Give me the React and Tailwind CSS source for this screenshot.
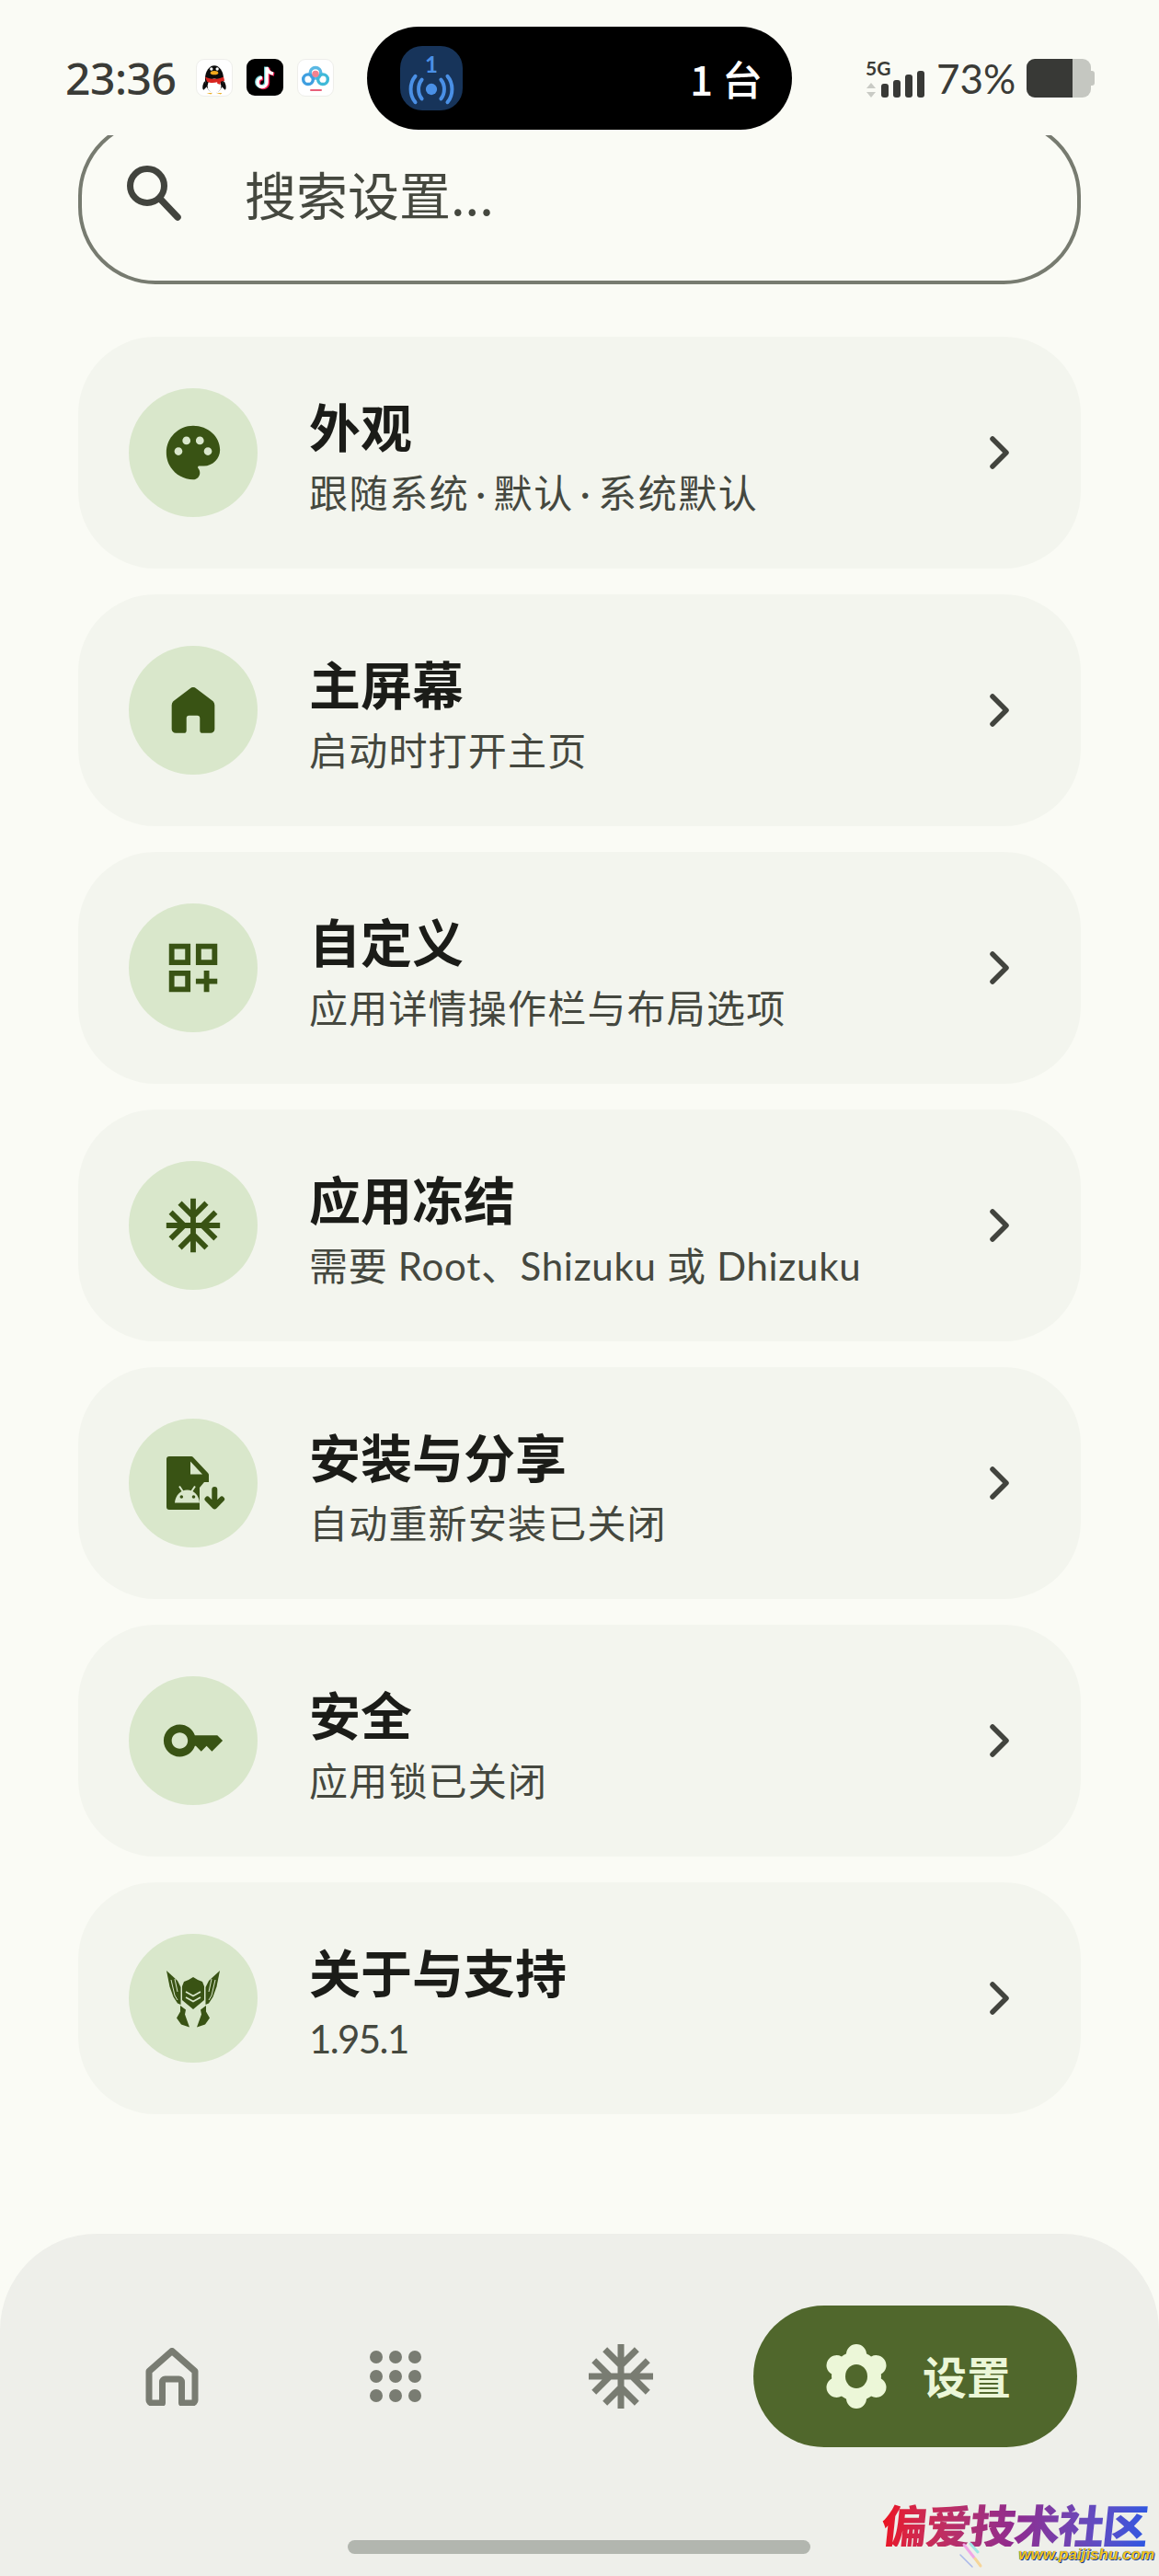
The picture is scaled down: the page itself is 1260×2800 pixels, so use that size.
const CJK = { fontFamily: '"Noto Sans CJK SC", sans-serif' };
const MIX = { fontFamily: 'Lato, "Noto Sans CJK SC", sans-serif' };

const P = {
  palette:
    "M12 2C6.49 2 2 6.49 2 12s4.49 10 10 10c1.38 0 2.5-1.12 2.5-2.5 0-.61-.23-1.2-.64-1.67-.08-.1-.13-.21-.13-.33 0-.28.22-.5.5-.5H16c3.31 0 6-2.69 6-6 0-4.96-4.49-9-10-9zm-5.5 11c-.83 0-1.5-.67-1.5-1.5S5.67 10 6.5 10s1.5.67 1.5 1.5S7.33 13 6.5 13zm3-4C8.67 9 8 8.33 8 7.5S8.67 6 9.5 6s1.5.67 1.5 1.5S10.33 9 9.5 9zm5 0c-.83 0-1.5-.67-1.5-1.5S13.67 6 14.5 6s1.5.67 1.5 1.5S15.33 9 14.5 9zm3 4c-.83 0-1.5-.67-1.5-1.5s.67-1.5 1.5-1.5 1.5.67 1.5 1.5-.67 1.5-1.5 1.5z",
  home:
    "M10.8 3.9a2 2 0 0 1 2.4 0l6 4.6a2 2 0 0 1 .8 1.6V19a1.5 1.5 0 0 1-1.5 1.5h-3a1 1 0 0 1-1-1V15a1 1 0 0 0-1-1h-3a1 1 0 0 0-1 1v4.5a1 1 0 0 1-1 1h-3A1.5 1.5 0 0 1 4 19v-8.900a2 2 0 0 1 .8-1.600z",
  custom:
    "M3 11h8V3H3v8zm2-6h4v4H5V5zm8-2v8h8V3h-8zm6 6h-4V5h4v4zM3 21h8v-8H3v8zm2-6h4v4H5v-4zm13-2h-2v3h-3v2h3v3h2v-3h3v-2h-3z",
  snow:
    "M22 11h-4.170l3.240-3.240-1.410-1.420L15 11h-2V9l4.660-4.660-1.420-1.410L13 6.170V2h-2v4.170L7.760 2.930 6.340 4.340 11 9v2H9L4.340 6.340 2.930 7.760 6.170 11H2v2h4.170l-3.240 3.240 1.410 1.420L9 13h2v2l-4.660 4.660 1.420 1.410L11 17.830V22h2v-4.170l3.240 3.240 1.420-1.410L13 15v-2h2l4.660 4.660 1.410-1.420L17.830 13H22z",
  key:
    "M21 10h-8.350C11.830 7.670 9.610 6 7 6c-3.310 0-6 2.690-6 6s2.690 6 6 6c2.610 0 4.830-1.670 5.650-4H13l2 2 2-2 2 2 4-4.040L21 10zM7 15c-1.650 0-3-1.350-3-3s1.350-3 3-3 3 1.350 3 3-1.350 3-3 3z",
};

function Mat({ d, size = 70, color = "#395314" }) {
  return (
    <svg width={size} height={size} viewBox="0 0 24 24" fill={color} className="shrink-0">
      <path d={d} />
    </svg>
  );
}

function ApkIcon() {
  return (
    <svg width="70" height="70" viewBox="0 0 70 70" className="shrink-0">
      <path d="M9 6H33a3 3 0 0 1 2 1L51 24a3 3 0 0 1 1 2V34H47L42 40V64H9a3 3 0 0 1-3-3V9a3 3 0 0 1 3-3z" fill="#395314" />
      <path d="M32 11.500 45 25.500H32z" fill="#d9e7cb" />
      <path d="M15 56.500c.5-8 6.500-14 13.500-14s13 6 13.500 14z" fill="#d9e7cb" />
      <path d="M20 38.500l4 6M37 38.500l-4 6" stroke="#d9e7cb" strokeWidth="2" />
      <circle cx="22.300" cy="50" r="1.800" fill="#395314" />
      <circle cx="35.500" cy="50" r="1.800" fill="#395314" />
      <path d="M58.300 42v17M50.500 52.500l7.800 7.800 7.800-7.800" fill="none" stroke="#395314" strokeWidth="6" strokeLinecap="round" strokeLinejoin="round" />
    </svg>
  );
}

function HelmetIcon() {
  const half = (
    <g fill="#395314">
      <path d="M6 5 18 16l3.500 7v19l-3.500-1.500-4.500-7-4-11z" />
      <path d="M21 43l6 4.500-1 5 5 14-9-3-5-7 4-7z" />
    </g>
  );
  return (
    <svg width="70" height="70" viewBox="0 0 70 70" className="shrink-0">
      {half}
      <g transform="translate(70 0) scale(-1 1)">{half}</g>
      <path d="M35 12l5 3 5 2 2 5v15L35 47 23 37V22l2-5 5-2z" fill="#395314" />
      <path d="M27 28l8 4.500 8-4.500M27 34l8 4.500 8-4.500" fill="none" stroke="#d9e7cb" strokeWidth="1.600" />
      <path d="M11 15l4 17 3 5M15 14l3 14M59 15l-4 17-3 5M55 14l-3 14" fill="none" stroke="#d9e7cb" strokeWidth="1" />
    </svg>
  );
}

const rows = [
  { t: "外观", s: "跟随系统\u2009·\u2009默认\u2009·\u2009系统默认", i: <Mat d={P.palette} />, c: "tracking-[1.6px]" },
  { t: "主屏幕", s: "启动时打开主页", i: <Mat d={P.home} />, c: "tracking-[1.2px]" },
  { t: "自定义", s: "应用详情操作栏与布局选项", i: <Mat d={P.custom} />, c: "tracking-[1.2px]" },
  { t: "应用冻结", s: "需要 Root、Shizuku 或 Dhizuku", i: <Mat d={P.snow} />, c: "tracking-[0.7px]" },
  { t: "安装与分享", s: "自动重新安装已关闭", i: <ApkIcon />, c: "tracking-[1.2px]" },
  { t: "安全", s: "应用锁已关闭", i: <Mat d={P.key} />, c: "tracking-[1.2px]" },
  { t: "关于与支持", s: "1.95.1", i: <HelmetIcon />, c: "tracking-[-1.6px]" },
];

function Row({ t, s, i, c }) {
  return (
    <div className="flex h-[252px] items-center rounded-[84px] bg-[#f3f5ee] pl-[55px] pr-[72px]">
      <div className="flex h-[140px] w-[140px] shrink-0 items-center justify-center rounded-full bg-[#d9e7cb]">{i}</div>
      <div className="ml-[56px] flex min-w-0 flex-1 flex-col pt-[7px]">
        <div className="text-[56px] font-bold leading-[68px] text-[#1b1c18]" style={CJK}>{t}</div>
        <div className={`mt-[13px] text-[42px] leading-[54px] text-[#45483f] ${c}`} style={MIX}>{s}</div>
      </div>
      <svg width="32" height="40" viewBox="0 0 32 40" fill="none" className="shrink-0">
        <path d="M8 5l15 15L8 35" stroke="#42443e" strokeWidth="5.500" strokeLinecap="round" strokeLinejoin="round" />
      </svg>
    </div>
  );
}

function AppIcons() {
  return (
    <div className="ml-[21px] mt-[64px] flex gap-[15px]">
      <div className="flex h-[41px] w-[40px] items-center justify-center rounded-[9px] border border-[#eeeeea] bg-white">
        <svg width="28" height="36" viewBox="0 0 26 34">
          <ellipse cx="13" cy="18" rx="9.500" ry="14" fill="#0b0b0b" />
          <path d="M3 20C.5 24 .5 28 2 29l4-4zM23 20c2.500 4 2.500 8 1 9l-4-4z" fill="#0b0b0b" />
          <ellipse cx="13" cy="25" rx="7" ry="7.500" fill="#fff" />
          <ellipse cx="13" cy="11.500" rx="4" ry="2" fill="#f2a81c" />
          <circle cx="10" cy="7.500" r="1.600" fill="#fff" />
          <circle cx="16" cy="7.500" r="1.600" fill="#fff" />
          <path d="M3.500 15.500c6 3 13 3 19 0l1 4-4 1-.5 3-3-1v-1.500c-3.500 1-7.500 1-10.500-.5z" fill="#d8251f" />
          <path d="M5 32h6l-1.500 1.500zM15 32h6l-1.500 1.500z" fill="#eab02a" />
        </svg>
      </div>
      <div className="flex h-[40px] w-[40px] items-center justify-center rounded-[9px] bg-black">
        <svg width="28" height="30" viewBox="0 0 28 30" fill="none">
          <path d="M16 4v16.500a5 5 0 1 1-5-5" stroke="#ee1d52" strokeWidth="4" transform="translate(1.200 .8)" />
          <path d="M16 4c.5 4 3.500 6.500 7 7" stroke="#ee1d52" strokeWidth="4" transform="translate(1.200 .8)" />
          <path d="M16 4v16.500a5 5 0 1 1-5-5" stroke="#69c9d0" strokeWidth="4" transform="translate(-1 -.5)" />
          <path d="M16 4v16.500a5 5 0 1 1-5-5M16 4c.5 4 3.500 6.500 7 7" stroke="#fff" strokeWidth="3.500" />
        </svg>
      </div>
      <div className="flex h-[41px] w-[40px] flex-col items-center rounded-[9px] border border-[#eeeeea] bg-white pt-[5px]">
        <svg width="32" height="25" viewBox="0 0 30 22" fill="none">
          <circle cx="15" cy="8" r="5.500" stroke="#59b7e3" strokeWidth="3.200" />
          <circle cx="7.500" cy="14.500" r="5" stroke="#3f9fe0" strokeWidth="3.200" />
          <circle cx="22.500" cy="14.500" r="5" stroke="#3fb9d8" strokeWidth="3.200" />
          <circle cx="15" cy="9" r="3.500" fill="#f3828f" />
        </svg>
        <div className="mt-[2px] h-[2px] w-[13px] rounded-full bg-[#e8607a]" />
      </div>
    </div>
  );
}

function Island() {
  return (
    <div className="ml-[36px] mt-[29px] flex h-[112px] w-[462px] items-center justify-between rounded-full bg-black pl-[36px] pr-[32px]">
      <div className="relative flex h-[70px] w-[68px] flex-col items-center rounded-[24px] bg-[#17345a] pt-[10px]">
        <span className="text-[24px] font-bold leading-[19px] text-[#4a90e6]" style={MIX}>1</span>
        <svg width="52" height="34" viewBox="0 0 52 36" fill="none" className="mt-[1px]">
          <circle cx="26" cy="18" r="6.500" fill="#4a90e6" />
          <path d="M15 7c-5 6-5 16 0 22M37 7c5 6 5 16 0 22M7.500 3c-7 8-7 22 0 30M44.500 3c7 8 7 22 0 30" stroke="#4a90e6" strokeWidth="4.200" strokeLinecap="round" />
        </svg>
      </div>
      <span className="text-[44px] font-medium leading-none text-white" style={CJK}>1 台</span>
    </div>
  );
}

function RightStatus() {
  return (
    <div className="ml-[80px] mt-[64px] flex items-start">
      <div className="relative h-[42px] w-[66px]">
        <span className="absolute left-0 top-0 text-[21px] font-bold leading-[19px] text-[#3a3b37]" style={MIX}>5G</span>
        <svg className="absolute left-0 top-[25px]" width="12" height="18" viewBox="0 0 12 18">
          <path d="M6 1l5 6H1z" fill="#c9cbc5" />
          <path d="M6 17l5-6H1z" fill="#c9cbc5" />
        </svg>
        <div className="absolute bottom-0 left-[17px] flex items-end gap-[5px]">
          <div className="h-[15px] w-[8px] rounded-[3px] bg-[#383936]" />
          <div className="h-[19px] w-[8px] rounded-[3px] bg-[#383936]" />
          <div className="h-[25px] w-[8px] rounded-[3px] bg-[#383936]" />
          <div className="h-[29px] w-[8px] rounded-[3px] bg-[#383936]" />
        </div>
      </div>
      <span className="ml-[11px] text-[44px] leading-[42px] text-[#3a3b37]" style={MIX}>73%</span>
      <div className="ml-[12px] flex items-center">
        <div className="flex h-[42px] w-[70px] overflow-hidden rounded-[9px] bg-[#c5c7c1]">
          <div className="h-full w-[50px] bg-[#383936]" />
        </div>
        <div className="h-[16px] w-[4px] rounded-r-[3px] bg-[#c5c7c1]" />
      </div>
    </div>
  );
}

function NavHome() {
  return (
    <svg width="58" height="63" viewBox="0 0 58 63" fill="none" className="shrink-0">
      <path d="M29 3.500 54 25.500V57a3 3 0 0 1-3 3H39.500V37a3 3 0 0 0-3-3h-15a3 3 0 0 0-3 3v23H7a3 3 0 0 1-3-3V25.500z" stroke="#797c72" strokeWidth="7" strokeLinejoin="round" />
    </svg>
  );
}

function NavDots() {
  const dots = [0, 1, 2, 3, 4, 5, 6, 7, 8];
  return (
    <div className="grid w-[56px] grid-cols-3 gap-x-[7px] gap-y-[7px]">
      {dots.map((d) => (
        <div key={d} className="h-[14px] w-[14px] rounded-full bg-[#797c72]" />
      ))}
    </div>
  );
}

function Gear() {
  return (
    <svg width="70" height="70" viewBox="0 0 70 70" className="shrink-0">
      <g stroke="#ecf7d8" strokeWidth="22" strokeLinecap="round">
        <path d="M35 11v48M13.500 23l43 24M13.500 47l43-24" />
      </g>
      <circle cx="35" cy="35" r="27" fill="#ecf7d8" />
      <ellipse cx="35" cy="35" rx="12" ry="13" fill="#50672c" />
    </svg>
  );
}

function Watermark() {
  return (
    <div className="absolute left-[955px] top-[2719px] w-[300px]">
      <div
        className="-skew-x-6 bg-gradient-to-r from-[#ee0a12] via-[#8e2a90] to-[#1f58e6] bg-clip-text pl-[4px] text-[50px] font-black leading-[49px] tracking-[-2px] text-transparent"
        style={CJK}
      >
        偏爱技术社区
      </div>
      <div
        className="text-right text-[17px] font-bold italic leading-[18px] text-[#f2c420]"
        style={{ fontFamily: '"Liberation Sans", sans-serif', textShadow: "0 0 1px #1c3f8c, 1px 1px 0 #1c3f8c" }}
      >
        www.paijishu.com
      </div>
      <svg className="absolute left-[85px] top-[44px]" width="32" height="30" viewBox="0 0 32 30" fill="none" strokeLinecap="round">
        <path d="M8 3l11 14" stroke="#f0a6e6" strokeWidth="3" />
        <path d="M15 2l8 9" stroke="#9fe8e6" strokeWidth="3" />
        <path d="M4 14l13 13" stroke="#aab8ea" strokeWidth="1.500" />
        <path d="M20 18l6 8" stroke="#f5d59a" strokeWidth="3" />
      </svg>
    </div>
  );
}

export default function App() {
  return (
    <div className="relative flex h-[2800px] w-[1260px] flex-col overflow-hidden bg-[#fafbf5]">
      <div className="flex h-[147px] shrink-0 items-start pl-[71px]">
        <span className="mt-[56px] w-[121px] text-[48px] font-medium leading-[58px] tracking-[-0.5px] text-[#3a3b37]" style={{ fontFamily: '"Noto Sans", sans-serif' }}>23:36</span>
        <AppIcons />
        <Island />
        <RightStatus />
      </div>
      <div className="flex flex-1 flex-col px-[85px]">
        <div className="h-[162px] shrink-0 overflow-hidden">
          <div className="-mt-[18px] flex h-[180px] items-center rounded-[84px] border-[4px] border-[#777b70] pb-[18px] pl-[44px]">
            <svg width="70" height="70" viewBox="0 0 70 70" fill="none" className="mt-[-1px] shrink-0">
              <circle cx="27" cy="27" r="18.500" stroke="#42443e" strokeWidth="7" />
              <path d="M41 41l19 20" stroke="#42443e" strokeWidth="7.500" strokeLinecap="round" />
            </svg>
            <span className="ml-[63px] text-[56px] leading-none text-[#45483f]" style={CJK}>搜索设置...</span>
          </div>
        </div>
        <div className="mt-[57px] flex flex-col gap-[28px]">
          {rows.map((r) => (
            <Row key={r.t} {...r} />
          ))}
        </div>
      </div>
      <div className="relative h-[372px] shrink-0 rounded-t-[105px] bg-[#eeefea] pt-[78px]">
        <div className="flex h-[154px] items-center pl-[158px]">
          <NavHome />
          <div className="ml-[186px]"><NavDots /></div>
          <div className="ml-[175px]"><Mat d={P.snow} size={84} color="#797c72" /></div>
          <div className="ml-[102px] flex h-[154px] w-[352px] items-center rounded-full bg-[#50672c] pl-[77px]">
            <Gear />
            <span className="mb-[5px] ml-[37px] text-[48px] font-bold leading-none text-[#ecf7d8]" style={CJK}>设置</span>
          </div>
        </div>
        <div className="absolute bottom-[24px] left-[378px] h-[15px] w-[503px] rounded-full bg-[#b2b6af]" />
      </div>
      <Watermark />
    </div>
  );
}
